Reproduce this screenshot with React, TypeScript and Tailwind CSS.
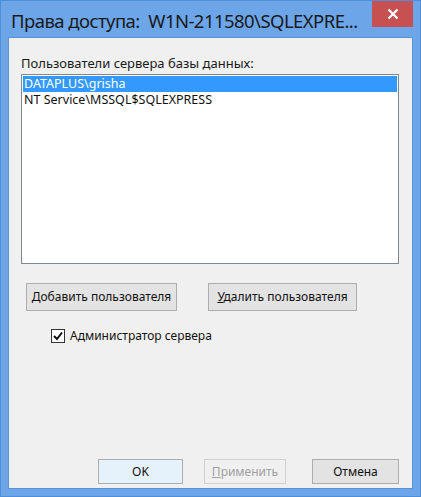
const font = { fontFamily: '"Noto Sans", "Liberation Sans", sans-serif' };

const Btn = ({
  children,
  className = "",
}: {
  children: React.ReactNode;
  className?: string;
}) => (
  <div
    className={
      "flex items-center justify-center border border-[#adadad] bg-[#e3e3e3] text-[12px] text-[#111] " +
      className
    }
  >
    {children}
  </div>
);

export default function App() {
  return (
    <div
      className="flex h-[497px] w-[421px] flex-col border border-[#4f8ed8] bg-[#6ca6e9]"
      style={font}
    >
      {/* title bar */}
      <div className="flex h-[36px] items-start justify-between">
        <div className="whitespace-nowrap pl-[10px] pt-[7px] text-[18.5px] leading-[26px] tracking-[-0.55px] text-[#1a1a1a]">
          Права доступа:&nbsp; W1N-211580\SQLEXPRE...
        </div>
        <div className="mr-[7px] flex h-[26px] w-[41px] shrink-0 items-center justify-center bg-[#c75050]">
          <svg width="12" height="12" viewBox="0 0 12 12">
            <path d="M1.5 1.5 L10.5 10.5 M10.5 1.5 L1.5 10.5" stroke="#fff" strokeWidth="2.2" />
          </svg>
        </div>
      </div>

      {/* client area */}
      <div className="mx-[7px] mb-[7px] flex flex-1 flex-col border border-[#5a94d8] bg-[#f0f0f0]">
        <div className="mt-[17px] pl-[12px] text-[13px] leading-[16px] text-[#1a1a1a]">
          Пользователи сервера базы данных:
        </div>

        <div className="ml-[12px] mt-[3px] h-[190px] w-[378px] border border-[#828790] bg-white p-[1px] text-[12.5px] leading-[16px]">
          <div className="bg-[#3399ff] px-[1px] text-white">DATAPLUS\grisha</div>
          <div className="px-[1px] text-[#111]">NT Service\MSSQL$SQLEXPRESS</div>
        </div>

        <div className="ml-[17px] mt-[19px] flex gap-[31px]">
          <Btn className="h-[28px] w-[151px]">
            <span>
              <span className="underline">Д</span>обавить пользователя
            </span>
          </Btn>
          <Btn className="h-[28px] w-[149px]">
            <span>
              <span className="underline">У</span>далить пользователя
            </span>
          </Btn>
        </div>

        <div className="ml-[42px] mt-[16px] flex items-center gap-[5px] text-[12px] text-[#111]">
          <div className="flex h-[14px] w-[14px] items-center justify-center border border-[#333] bg-white">
            <svg width="10" height="10" viewBox="0 0 10 10">
              <path d="M1 5 L4 8 L9 1.5" fill="none" stroke="#111" strokeWidth="2" />
            </svg>
          </div>
          <span>Администратор сервера</span>
        </div>

        <div className="mt-auto mb-[4px] ml-[89px] flex">
          <Btn className="h-[25px] w-[85px] border-[#3c7fb1] bg-[#e5f1fb]">OK</Btn>
          <Btn className="ml-[21px] h-[25px] w-[82px] border-[#d0d0d0] bg-[#f0f0f0] text-[#a0a0a0]">
            <span>
              <span className="underline">П</span>рименить
            </span>
          </Btn>
          <Btn className="ml-[26px] h-[25px] w-[87px]">Отмена</Btn>
        </div>
      </div>
    </div>
  );
}
